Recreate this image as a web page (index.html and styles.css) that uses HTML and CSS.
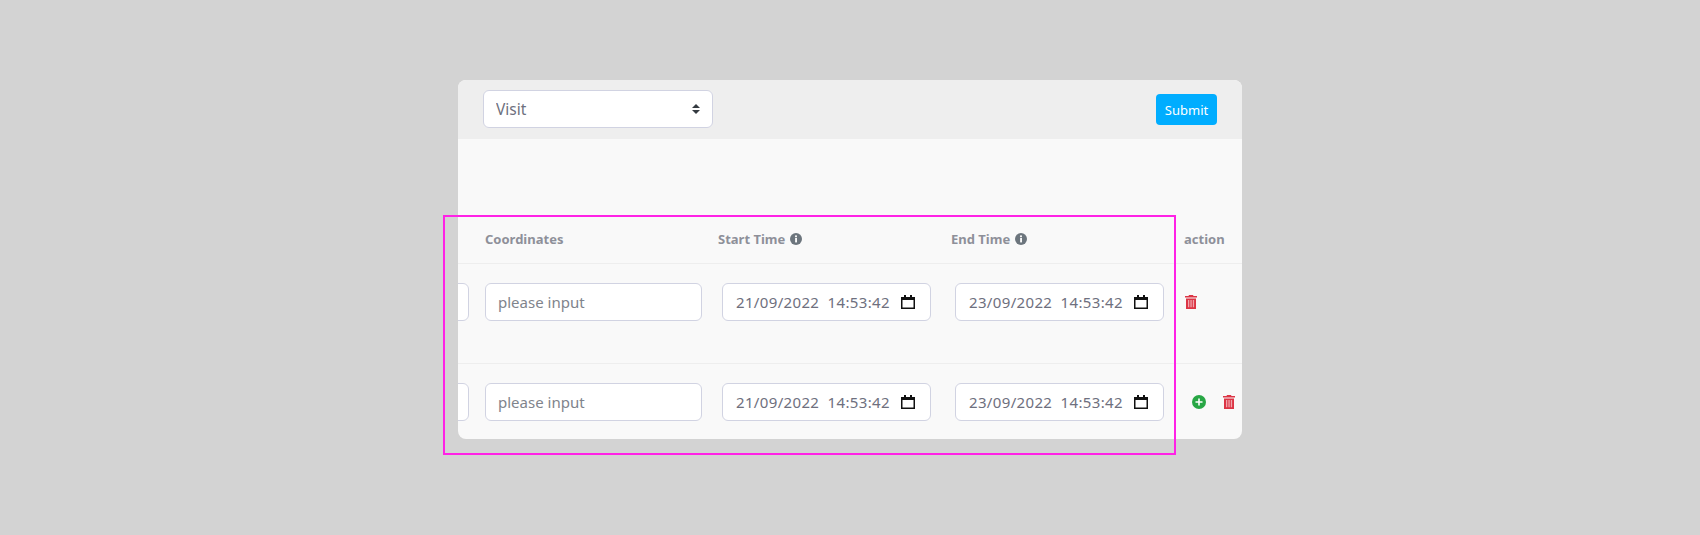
FILE: index.html
```html
<!DOCTYPE html>
<html lang="en">
<head>
    <meta charset="UTF-8">
    <meta name="viewport" content="width=device-width, initial-scale=1.0">
    <title>Visit</title>
    <link rel="stylesheet" href="styles.css">
</head>
<body>
    <div class="card">
        <div class="card-header">
            <select class="type-select">
                <option>Visit</option>
            </select>
            <button class="submit-btn">Submit</button>
        </div>

        <div class="card-body">
            <div class="row head-row">
                <div></div>
                <div>Coordinates</div>
                <div class="head-cell">Start Time
                    <svg class="info-icon" viewBox="0 0 12 12"><circle cx="6" cy="6" r="6" fill="#6c757d"/><rect x="5.1" y="5" width="1.9" height="4.4" fill="#f9f9f9"/><circle cx="6" cy="3.3" r="1.1" fill="#f9f9f9"/></svg>
                </div>
                <div class="head-cell">End Time
                    <svg class="info-icon" viewBox="0 0 12 12"><circle cx="6" cy="6" r="6" fill="#6c757d"/><rect x="5.1" y="5" width="1.9" height="4.4" fill="#f9f9f9"/><circle cx="6" cy="3.3" r="1.1" fill="#f9f9f9"/></svg>
                </div>
                <div>action</div>
            </div>

            <div class="row data-row tall">
                <div class="cut-cell"><input class="field cut-field" type="text"></div>
                <div><input class="field coord-field" type="text" placeholder="please input"></div>
                <div class="date-cell">
                    <div class="field date-field"><span>21/09/2022 14:53:42</span>
                        <svg class="cal-icon" viewBox="0 0 14 14"><path d="M3 0h2v2h4V0h2v2h3v12H0V2h3z" fill="#111"/><rect x="1.5" y="5" width="11" height="7.5" fill="#fff"/></svg>
                    </div>
                </div>
                <div class="date-cell">
                    <div class="field date-field"><span>23/09/2022 14:53:42</span>
                        <svg class="cal-icon" viewBox="0 0 14 14"><path d="M3 0h2v2h4V0h2v2h3v12H0V2h3z" fill="#111"/><rect x="1.5" y="5" width="11" height="7.5" fill="#fff"/></svg>
                    </div>
                </div>
                <div class="actions">
                    <svg class="trash-icon" viewBox="0 0 12 14"><path d="M4 0h4l.5 1H12v1.6H0V1h3.5z" fill="#dc3545"/><path d="M1 3.4h10V14H1z" fill="#dc3545"/><path d="M3 5h1.3v7.3H3zM5.4 5h1.3v7.3H5.4zM7.8 5h1.3v7.3H7.8z" fill="#f0a5ad"/></svg>
                </div>
            </div>

            <div class="row data-row">
                <div class="cut-cell"><input class="field cut-field" type="text"></div>
                <div><input class="field coord-field" type="text" placeholder="please input"></div>
                <div class="date-cell">
                    <div class="field date-field"><span>21/09/2022 14:53:42</span>
                        <svg class="cal-icon" viewBox="0 0 14 14"><path d="M3 0h2v2h4V0h2v2h3v12H0V2h3z" fill="#111"/><rect x="1.5" y="5" width="11" height="7.5" fill="#fff"/></svg>
                    </div>
                </div>
                <div class="date-cell">
                    <div class="field date-field"><span>23/09/2022 14:53:42</span>
                        <svg class="cal-icon" viewBox="0 0 14 14"><path d="M3 0h2v2h4V0h2v2h3v12H0V2h3z" fill="#111"/><rect x="1.5" y="5" width="11" height="7.5" fill="#fff"/></svg>
                    </div>
                </div>
                <div class="actions last">
                    <svg class="plus-icon" viewBox="0 0 14 14"><circle cx="7" cy="7" r="7" fill="#28a745"/><path d="M6.2 3.5h1.6v2.7h2.7v1.6H7.8v2.7H6.2V7.8H3.5V6.2h2.7z" fill="#fff"/></svg>
                    <svg class="trash-icon" viewBox="0 0 12 14"><path d="M4 0h4l.5 1H12v1.6H0V1h3.5z" fill="#dc3545"/><path d="M1 3.4h10V14H1z" fill="#dc3545"/><path d="M3 5h1.3v7.3H3zM5.4 5h1.3v7.3H5.4zM7.8 5h1.3v7.3H7.8z" fill="#f0a5ad"/></svg>
                </div>
            </div>
        </div>
    </div>

    <!-- highlight frame over the table -->
    <div class="highlight"></div>
</body>
</html>
```

FILE: styles.css
```css
html, body {
    height: 100%;
}
body {
    margin: 0;
    padding-top: 80px;
    box-sizing: border-box;
    background-color: #d3d3d3;
    font-family: "Noto Sans", "Open Sans", Arial, sans-serif;
    color: #6e707e;
    overflow: hidden;
}
.card {
    width: 784px;
    margin-left: 458px;
    border-radius: 8px;
    overflow: hidden;
    background: #f9f9f9;
}
.card-header {
    height: 59px;
    box-sizing: border-box;
    padding: 10px 25px;
    display: flex;
    justify-content: space-between;
    align-items: flex-start;
    background: #eeeeee;
}
.type-select {
    width: 230px;
    height: 38px;
    margin: 0;
    padding: 0 24px 0 12px;
    appearance: none;
    border: 1px solid #d1d3e2;
    border-radius: 6px;
    font-family: inherit;
    font-size: 15.5px;
    color: #6e707e;
    background: #fff url("data:image/svg+xml,%3csvg xmlns='http://www.w3.org/2000/svg' viewBox='0 0 4 5'%3e%3cpath fill='%23343a40' d='M2 0L0 2h4zm0 5L0 3h4z'/%3e%3c/svg%3e") no-repeat right 12px center / 8px 10px;
}
.submit-btn {
    width: 61px;
    height: 31px;
    margin-top: 4px;
    padding: 0;
    border: none;
    border-radius: 4px;
    background-color: #00adff;
    color: #fff;
    font-family: inherit;
    font-size: 13px;
}
.card-body {
    padding-top: 66px;
}
.row {
    display: grid;
    grid-template-columns: 27px 233px 233px 233px 58px;
}
.head-row {
    height: 58px;
    box-sizing: border-box;
    padding-top: 24px;
    font-size: 13px;
    font-weight: 700;
    line-height: 20px;
    color: #8e9099;
}
.head-cell {
    height: 20px;
    display: flex;
    align-items: center;
    gap: 5px;
}
.info-icon {
    width: 12px;
    height: 12px;
}
.data-row {
    height: 76px;
    box-sizing: border-box;
    padding-top: 19px;
    border-top: 1px solid #eeeeee;
}
.tall {
    height: 100px;
}
.field {
    height: 38px;
    box-sizing: border-box;
    margin: 0;
    border: 1px solid #d1d3e2;
    border-radius: 6px;
    background: #fff;
    font-family: inherit;
    font-size: 15px;
    color: #6e707e;
}
.cut-cell {
    overflow: hidden;
}
.cut-field {
    display: block;
    width: 60px;
    margin-left: -49px;
}
.coord-field {
    display: block;
    width: 217px;
    padding: 0 12px;
}
.coord-field::placeholder {
    color: #80848c;
}
.date-cell {
    padding-left: 4px;
}
.date-field {
    width: 209px;
    padding: 0 15px 0 13px;
    display: flex;
    align-items: center;
    justify-content: space-between;
    word-spacing: 4px;
    letter-spacing: 0.35px;
}
.cal-icon {
    width: 14px;
    height: 14px;
}
.actions {
    height: 38px;
    display: flex;
    align-items: center;
    padding-left: 1px;
}
.actions.last {
    padding-left: 8px;
    gap: 17px;
}
.trash-icon {
    width: 12px;
    height: 14px;
}
.plus-icon {
    width: 14px;
    height: 14px;
}
.highlight {
    position: absolute;
    left: 443px;
    top: 215px;
    width: 733px;
    height: 240px;
    box-sizing: border-box;
    border: 2px solid #ff22e6;
    pointer-events: none;
}
```
